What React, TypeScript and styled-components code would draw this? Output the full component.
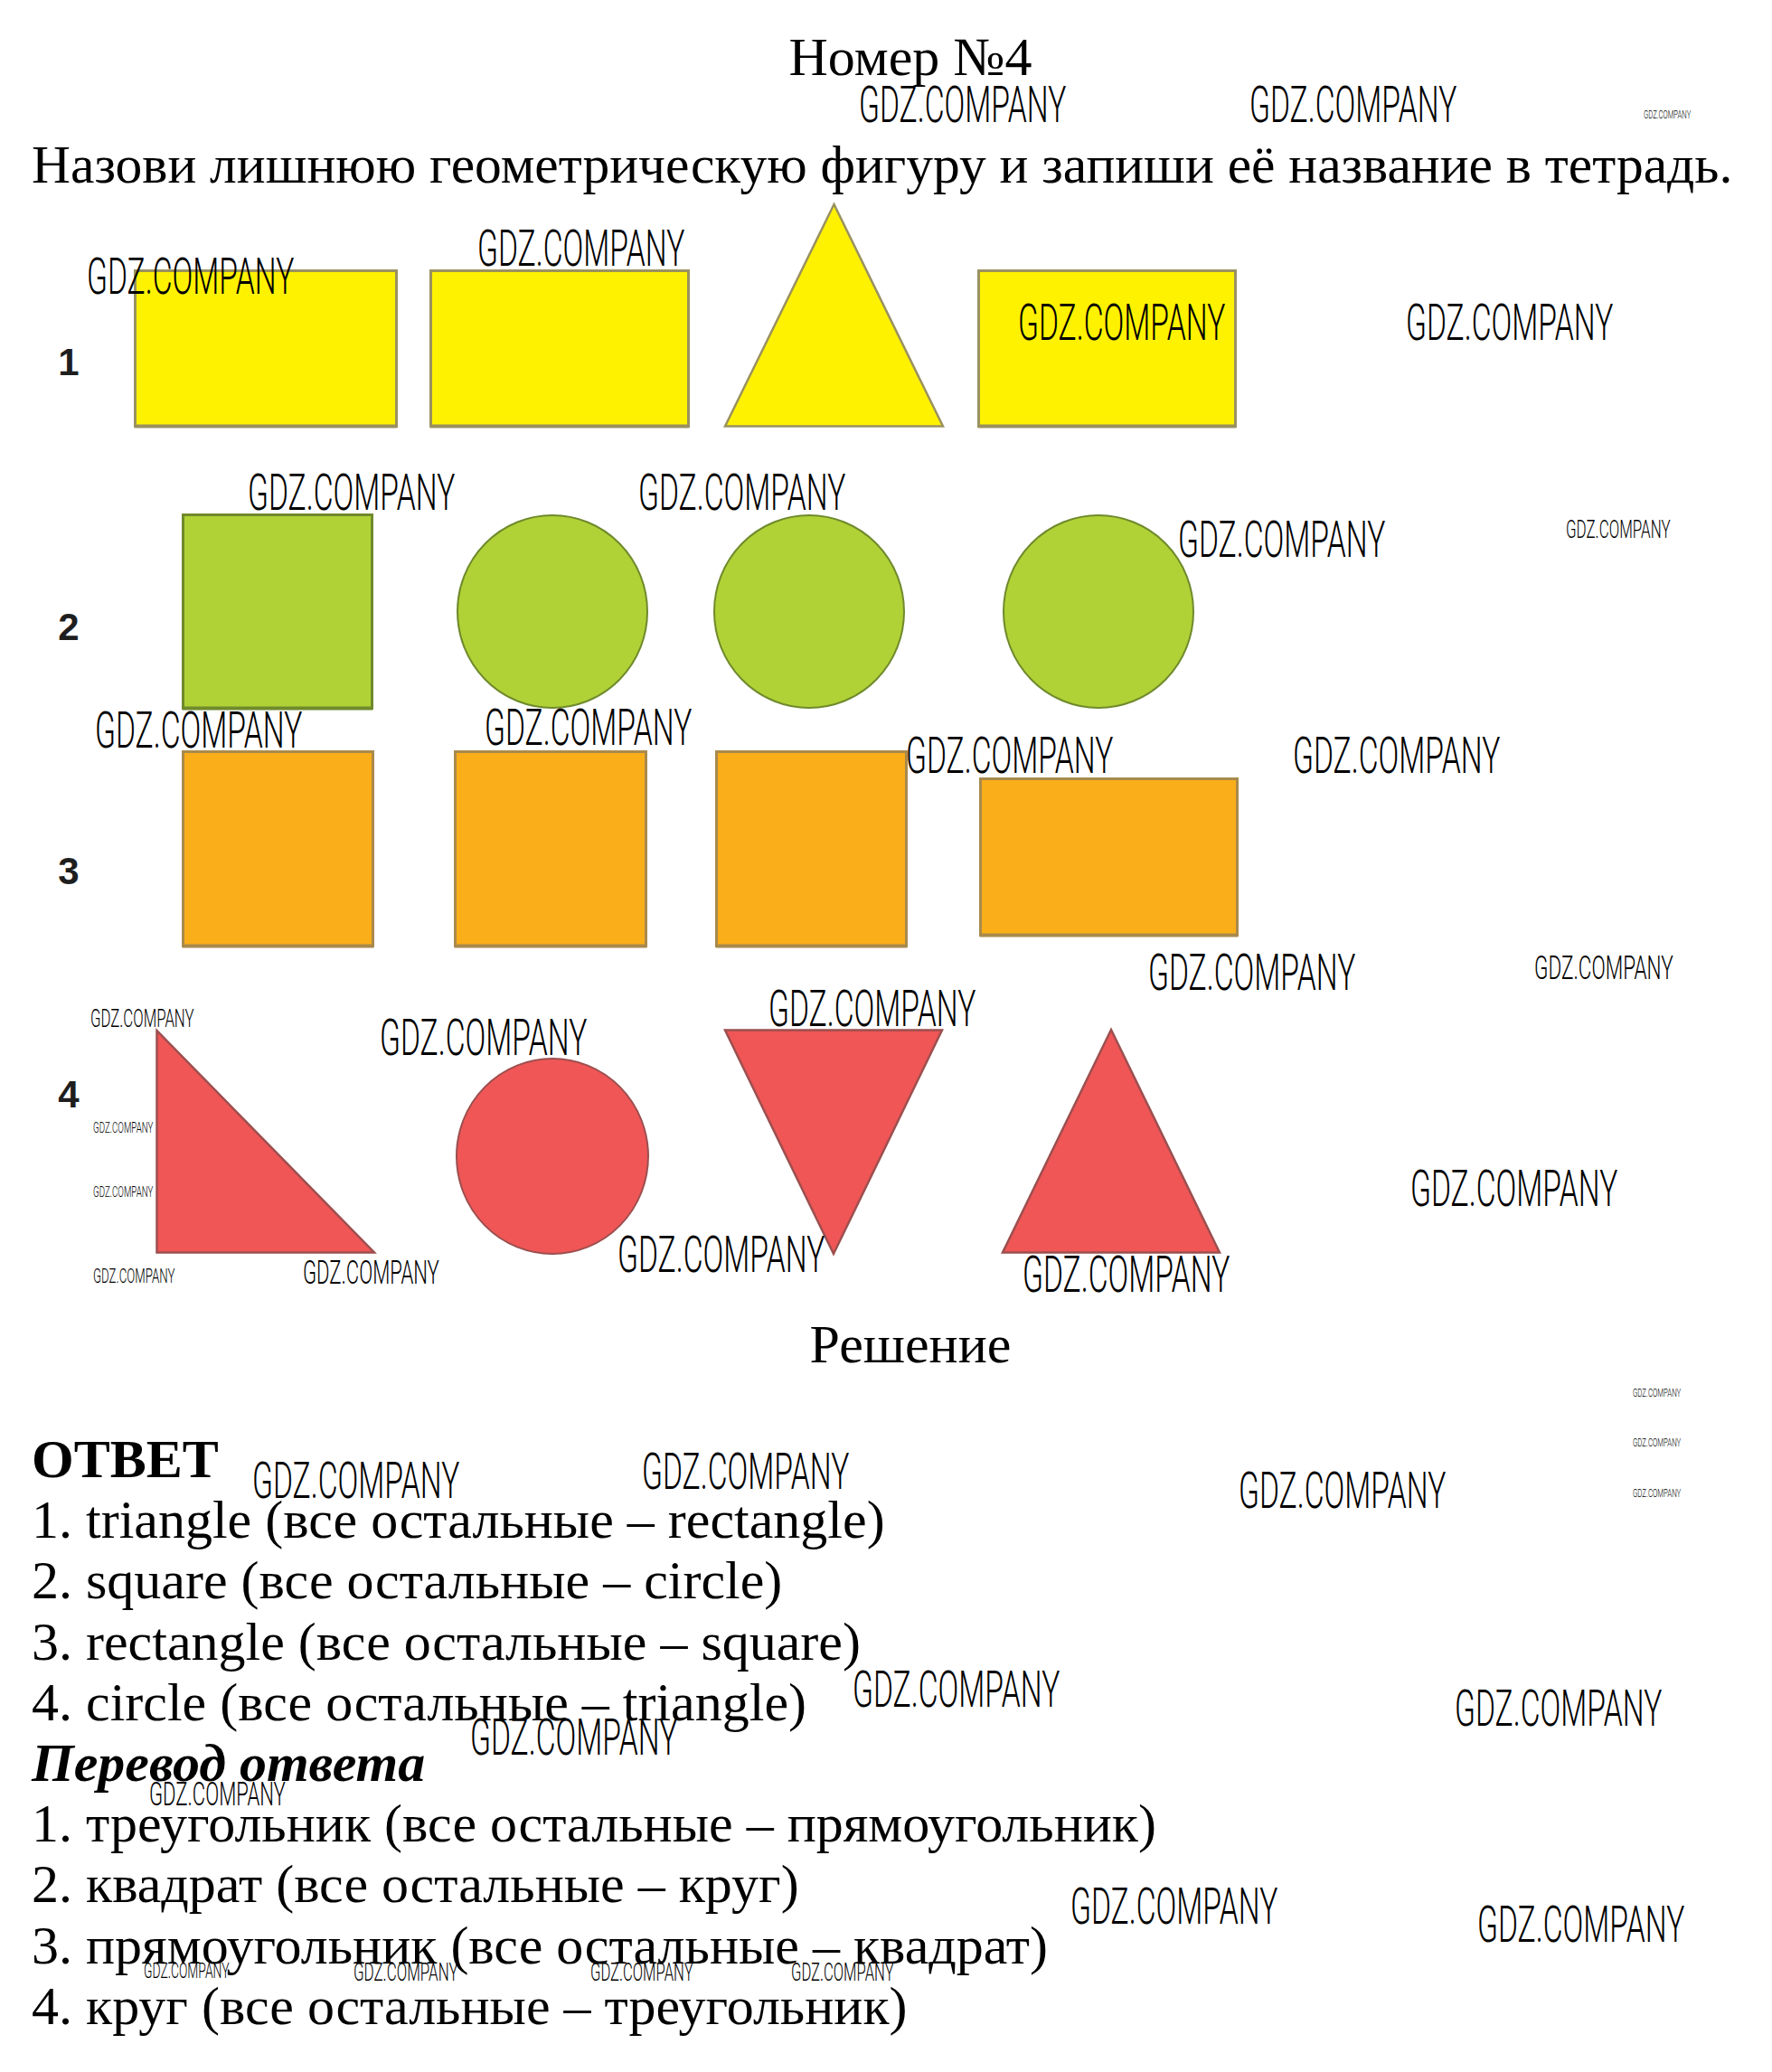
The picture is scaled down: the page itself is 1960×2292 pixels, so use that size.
import React from "react";
import styled, { createGlobalStyle } from "styled-components";

const GlobalStyle = createGlobalStyle`
  html, body {
    margin: 0;
    padding: 0;
    background: #ffffff;
  }
  body {
    font-family: "Liberation Serif", "Times New Roman", serif;
    color: #000;
  }
`;

type Kind = "rect" | "circle" | "tri" | "inv" | "right";

const palette = {
  yellow: { fill: "#fff200", stroke: "#9a9160" },
  green: { fill: "#b1d236", stroke: "#6f8a2c" },
  orange: { fill: "#f9ae1a", stroke: "#a98a4c" },
  red: { fill: "#f05656", stroke: "#9c4f4f" },
};

type Tone = keyof typeof palette;

const Page = styled.div`
  position: relative;
  width: 1960px;
  height: 2292px;
  overflow: hidden;
`;

const Title = styled.h1`
  margin: 29px 0 0;
  padding-left: 54px;
  font-size: 60px;
  font-weight: normal;
  line-height: 68px;
  text-align: center;
`;

const Task = styled.p`
  margin: 51px 0 0;
  padding-left: 35px;
  font-size: 59.5px;
  line-height: 68px;
  white-space: nowrap;
`;

const Figures = styled.div`
  display: flex;
  flex-direction: column;
  margin-top: 9px;
`;

const FigureRow = styled.div<{ $h: number; $mt: number; $align: string }>`
  display: flex;
  align-items: ${(p) => p.$align};
  height: ${(p) => p.$h}px;
  margin-top: ${(p) => p.$mt}px;
`;

const RowLabel = styled.span<{ $top: number }>`
  align-self: flex-start;
  width: 40px;
  margin: ${(p) => p.$top}px 0 0 56px;
  font-family: "Liberation Sans", Arial, sans-serif;
  font-weight: bold;
  font-size: 42px;
  line-height: 1;
  color: #1e1e1e;
  text-align: center;
`;

const ShapeBox = styled.svg<{ $ml: number; $mb: number }>`
  display: block;
  flex: none;
  margin-left: ${(p) => p.$ml}px;
  margin-bottom: ${(p) => p.$mb}px;
  overflow: visible;
`;

const Solution = styled.h2`
  margin: 65px 0 0;
  padding-left: 54px;
  font-size: 60px;
  font-weight: normal;
  line-height: 68px;
  text-align: center;
`;

const Answer = styled.div`
  margin-top: 60px;
  padding-left: 35px;
  font-size: 60px;
  line-height: 67.2px;
`;

const AnswerHead = styled.div<{ $italic?: boolean }>`
  font-weight: bold;
  font-style: ${(p) => (p.$italic ? "italic" : "normal")};
`;

const AnswerLine = styled.div`
  white-space: nowrap;
`;

const Watermark = styled.span<{ $x: number; $y: number; $w: number }>`
  position: absolute;
  left: ${(p) => p.$x}px;
  top: ${(p) => p.$y - 0.13 * ((p.$w / 224) * 55)}px;
  font-family: Roboto, "Liberation Sans", sans-serif;
  font-weight: 300;
  font-size: ${(p) => (p.$w / 224) * 55}px;
  line-height: 1;
  color: #000;
  white-space: nowrap;
  transform: scaleX(0.6);
  transform-origin: left top;
  pointer-events: none;
`;

type ShapeSpec = { kind: Kind; w: number; h: number; ml: number; mb?: number };

function Shape({ kind, w, h, ml, mb = 0, tone }: ShapeSpec & { tone: Tone }) {
  const { fill, stroke } = palette[tone];
  let body: React.ReactNode;
  if (kind === "rect") {
    body = (
      <>
        <rect x={1.5} y={1.5} width={w - 3} height={h - 3} fill={fill} stroke={stroke} strokeWidth={3} />
        <line x1={1} y1={h - 1.5} x2={w - 1} y2={h - 1.5} stroke={stroke} strokeWidth={4} />
      </>
    );
  } else if (kind === "circle") {
    body = (
      <ellipse cx={w / 2} cy={h / 2} rx={w / 2 - 1} ry={h / 2 - 1} fill={fill} stroke={stroke} strokeWidth={2} />
    );
  } else {
    const pts =
      kind === "tri"
        ? `${w / 2},1 ${w - 1},${h - 1.5} 1,${h - 1.5}`
        : kind === "inv"
        ? `1,1.5 ${w - 1},1.5 ${w / 2},${h - 1}`
        : `1.5,1 1.5,${h - 1.5} ${w - 1},${h - 1.5}`;
    body = <polygon points={pts} fill={fill} stroke={stroke} strokeWidth={2.5} strokeLinejoin="miter" />;
  }
  return (
    <ShapeBox width={w} height={h} viewBox={`0 0 ${w} ${h}`} $ml={ml} $mb={mb}>
      {body}
    </ShapeBox>
  );
}

const rows: {
  label: string;
  labelTop: number;
  h: number;
  mt: number;
  align: string;
  tone: Tone;
  shapes: ShapeSpec[];
}[] = [
  {
    label: "1",
    labelTop: 155,
    h: 248,
    mt: 0,
    align: "flex-end",
    tone: "yellow",
    shapes: [
      { kind: "rect", w: 292, h: 175, ml: 52 },
      { kind: "rect", w: 288, h: 175, ml: 35 },
      { kind: "tri", w: 243, h: 248, ml: 38 },
      { kind: "rect", w: 287, h: 175, ml: 37 },
    ],
  },
  {
    label: "2",
    labelTop: 105,
    h: 217,
    mt: 95,
    align: "center",
    tone: "green",
    shapes: [
      { kind: "rect", w: 212, h: 217, ml: 105 },
      { kind: "circle", w: 212, h: 215, ml: 92 },
      { kind: "circle", w: 212, h: 215, ml: 72 },
      { kind: "circle", w: 212, h: 215, ml: 108 },
    ],
  },
  {
    label: "3",
    labelTop: 113,
    h: 218,
    mt: 45,
    align: "flex-end",
    tone: "orange",
    shapes: [
      { kind: "rect", w: 213, h: 218, ml: 105 },
      { kind: "rect", w: 214, h: 218, ml: 88 },
      { kind: "rect", w: 213, h: 218, ml: 75 },
      { kind: "rect", w: 287, h: 176, ml: 79, mb: 12 },
    ],
  },
  {
    label: "4",
    labelTop: 52,
    h: 250,
    mt: 90,
    align: "flex-end",
    tone: "red",
    shapes: [
      { kind: "right", w: 243, h: 248, ml: 76, mb: 1 },
      { kind: "circle", w: 214, h: 218, ml: 89 },
      { kind: "inv", w: 242, h: 250, ml: 83 },
      { kind: "tri", w: 242, h: 249, ml: 65, mb: 1 },
    ],
  },
];

// [x, capTop, width] in page pixels
const marks: [number, number, number][] = [
  [950, 95, 228], [1382, 95, 228], [1818, 123, 52],
  [96, 285, 228], [528, 254, 228], [1126, 336, 228], [1555, 336, 228],
  [274, 524, 228], [706, 524, 228], [1303, 576, 228], [1732, 576, 115],
  [105, 787, 228], [536, 784, 228], [1002, 815, 228], [1430, 815, 228],
  [1270, 1055, 228], [1697, 1057, 153],
  [100, 1117, 114], [420, 1127, 228], [850, 1095, 228],
  [103, 1242, 66], [103, 1313, 66], [103, 1404, 90], [335, 1395, 150],
  [683, 1367, 228], [1131, 1389, 228], [1560, 1294, 228],
  [1806, 1536, 53], [1806, 1591, 53], [1806, 1647, 53],
  [279, 1617, 228], [710, 1607, 228], [1370, 1628, 228],
  [943, 1848, 228], [1609, 1869, 228], [520, 1901, 228],
  [165, 1972, 150], [1184, 2088, 228], [1634, 2108, 228],
  [159, 2172, 94], [391, 2172, 115], [653, 2172, 113], [875, 2172, 113],
];

export default function App() {
  return (
    <Page>
      <GlobalStyle />
      <Title>Номер №4</Title>
      <Task>Назови лишнюю геометрическую фигуру и запиши её название в тетрадь.</Task>

      <Figures>
        {rows.map((row) => (
          <FigureRow key={row.label} $h={row.h} $mt={row.mt} $align={row.align}>
            <RowLabel $top={row.labelTop}>{row.label}</RowLabel>
            {row.shapes.map((s, i) => (
              <Shape key={i} {...s} tone={row.tone} />
            ))}
          </FigureRow>
        ))}
      </Figures>

      <Solution>Решение</Solution>

      <Answer>
        <AnswerHead>ОТВЕТ</AnswerHead>
        <AnswerLine>1. triangle (все остальные – rectangle)</AnswerLine>
        <AnswerLine>2. square (все остальные – circle)</AnswerLine>
        <AnswerLine>3. rectangle (все остальные – square)</AnswerLine>
        <AnswerLine>4. circle (все остальные – triangle)</AnswerLine>
        <AnswerHead $italic>Перевод ответа</AnswerHead>
        <AnswerLine>1. треугольник (все остальные – прямоугольник)</AnswerLine>
        <AnswerLine>2. квадрат (все остальные – круг)</AnswerLine>
        <AnswerLine>3. прямоугольник (все остальные – квадрат)</AnswerLine>
        <AnswerLine>4. круг (все остальные – треугольник)</AnswerLine>
      </Answer>

      {marks.map(([x, y, w], i) => (
        <Watermark key={i} $x={x} $y={y} $w={w}>
          GDZ.COMPANY
        </Watermark>
      ))}
    </Page>
  );
}
